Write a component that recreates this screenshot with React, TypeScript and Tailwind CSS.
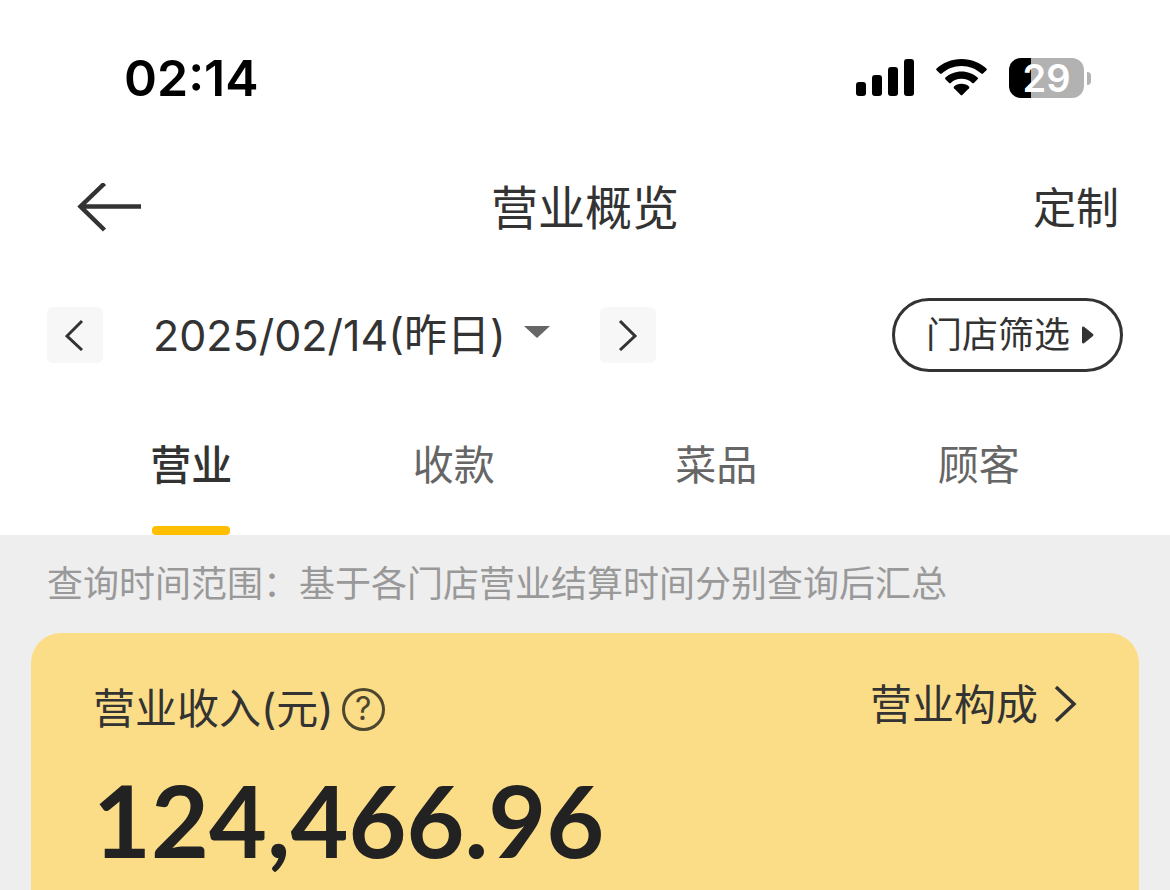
import React, { useState } from 'react';

const tabs = ['营业', '收款', '菜品', '顾客'];

const StatusBar: React.FC = () => (
  <div className="flex items-center justify-between pt-12 pl-[124px] pr-[79px] text-black">
    <span className="text-[50px] leading-[60px] font-semibold">02:14</span>
    <div className="flex items-center gap-[22px]">
      <svg className="w-[58px] h-[38px]" viewBox="0 0 58 38" fill="currentColor">
        <rect x="0" y="23" width="10" height="14" rx="3" />
        <rect x="16" y="16" width="10" height="21" rx="3" />
        <rect x="32" y="8" width="10" height="29" rx="3" />
        <rect x="48" y="0" width="10" height="37" rx="3" />
      </svg>
      <svg className="w-[51px] h-[38px]" viewBox="0 0 51 38" fill="currentColor">
        <path d="M25.5 0C35.5 0 44.4 3.9 50.4 9.6Q51.2 10.4 50.4 11.2L47 14.6Q46.2 15.4 45.3 14.6C40 9.8 33.3 7 25.5 7S11 9.8 5.7 14.6Q4.8 15.4 4 14.6L.6 11.2Q-.2 10.4 .6 9.6C6.6 3.9 15.5 0 25.5 0Z" />
        <path d="M25.5 12.4C31.8 12.4 37.5 14.7 41.6 18.6Q42.4 19.4 41.6 20.2L37.9 23.9Q37.1 24.7 36.2 23.9C33.3 21.3 29.7 19.8 25.5 19.8S17.7 21.3 14.8 23.9Q13.9 24.7 13.1 23.9L9.4 20.2Q8.6 19.4 9.4 18.6C13.5 14.7 19.2 12.4 25.5 12.4Z" />
        <path d="M25.5 24.8C28.6 24.8 31.2 25.8 33 27.5Q33.8 28.3 33 29.2L26.3 36.1Q25.5 36.9 24.7 36.1L18 29.2Q17.2 28.3 18 27.5C19.8 25.8 22.4 24.8 25.5 24.8Z" />
      </svg>
      <div className="flex items-center gap-[3px]">
        <div className="flex h-10 w-[75px] items-center justify-center rounded-xl bg-linear-to-r from-black from-30% to-[#b2b2b2] to-30% text-[38px] leading-none font-semibold text-white">
          29
        </div>
        <div className="h-[13px] w-1 rounded-r-full bg-[#b2b2b2]" />
      </div>
    </div>
  </div>
);

const Header: React.FC = () => (
  <header className="mt-[68px] grid grid-cols-[1fr_auto_1fr] items-center px-[51px] leading-[64px]">
    <button type="button" aria-label="返回" className="justify-self-start pl-[26px]">
      <svg className="w-16 h-[50px]" viewBox="0 0 64 50" fill="none" stroke="currentColor" strokeWidth="4.5">
        <path d="M27.5 .5 3.500 23.500l24 23.500M4 23.500h60" />
      </svg>
    </button>
    <h1 className="text-[47px]">营业概览</h1>
    <button type="button" className="justify-self-end text-[43px]">定制</button>
  </header>
);

const Filters: React.FC = () => (
  <div className="mt-[58px] flex items-center px-[47px]">
    <button type="button" aria-label="前一天" className="flex size-14 items-center justify-center rounded-md bg-[#f7f7f7]">
      <svg className="w-5 h-8" viewBox="0 0 20 32" fill="none" stroke="currentColor" strokeWidth="3">
        <path d="M17 2 2 17l15 14" />
      </svg>
    </button>
    <button type="button" className="mx-[50px] flex items-center gap-[18px] text-[43px] leading-[60px]">
      2025/02/14(昨日)
      <svg className="w-[26px] h-[18px]" viewBox="0 0 26 18" fill="#666">
        <path d="M0 0h26L13 12z" />
      </svg>
    </button>
    <button type="button" aria-label="后一天" className="flex size-14 items-center justify-center rounded-md bg-[#f7f7f7]">
      <svg className="w-5 h-8" viewBox="0 0 20 32" fill="none" stroke="currentColor" strokeWidth="3">
        <path d="m2 2 15 15L2 31" />
      </svg>
    </button>
    <button type="button" className="ml-auto flex h-[74px] items-center gap-3 rounded-full border-3 border-[#333] pl-[31px] pr-[26px] text-[36px]">
      门店筛选
      <svg className="w-3 h-[18px]" viewBox="0 0 12 18" fill="currentColor">
        <path d="M0 2Q0 0 2 .8L11 8Q12 9 11 10L2 17.2Q0 18 0 16z" />
      </svg>
    </button>
  </div>
);

const App: React.FC = () => {
  const [active, setActive] = useState('营业');

  return (
    <div className="flex min-h-screen flex-col bg-[#eee] font-['Inter','Noto_Sans_CJK_SC',sans-serif] text-[#333]">
      <div className="bg-white">
        <StatusBar />
        <Header />
        <Filters />

        {/* Tabs */}
        <nav className="mt-[63px] grid grid-cols-4 px-[60px]">
          {tabs.map((tab) => (
            <button
              key={tab}
              type="button"
              onClick={() => setActive(tab)}
              className={`flex flex-col items-center text-[41px] leading-[60px] ${
                active === tab ? 'font-medium' : 'text-[#666]'
              }`}
            >
              {tab}
              <span className={`mt-[31px] h-[9px] w-[78px] rounded-sm ${active === tab ? 'bg-[#ffbe00]' : ''}`} />
            </button>
          ))}
        </nav>
      </div>

      <p className="px-[47px] pt-6 text-[36px] leading-[50px] text-[#999]">
        查询时间范围：基于各门店营业结算时间分别查询后汇总
      </p>

      {/* Revenue card */}
      <section className="mx-[31px] mt-6 flex-1 rounded-t-[30px] bg-[#fcdd87] px-[62px] pt-[42px]">
        <div className="flex items-start justify-between text-[42px] leading-[60px]">
          <div className="flex items-center gap-2 pt-1">
            <h2>营业收入(元)</h2>
            <button type="button" aria-label="说明" className="flex size-[43px] items-center justify-center rounded-full border-3 border-[#4d472f] text-[32px] leading-none text-[#4d472f]">
              ?
            </button>
          </div>
          <a href="#composition" className="flex items-center gap-4">
            营业构成
            <svg className="w-[23px] h-[38px]" viewBox="0 0 23 38" fill="none" stroke="currentColor" strokeWidth="3.5">
              <path d="m2 1 18 17L2 35" />
            </svg>
          </a>
        </div>
        <p className="mt-5 font-['Lato',sans-serif] text-[100px] leading-[120px] font-bold text-[#222]">
          124,466.96
        </p>
      </section>
    </div>
  );
};

export default App;
